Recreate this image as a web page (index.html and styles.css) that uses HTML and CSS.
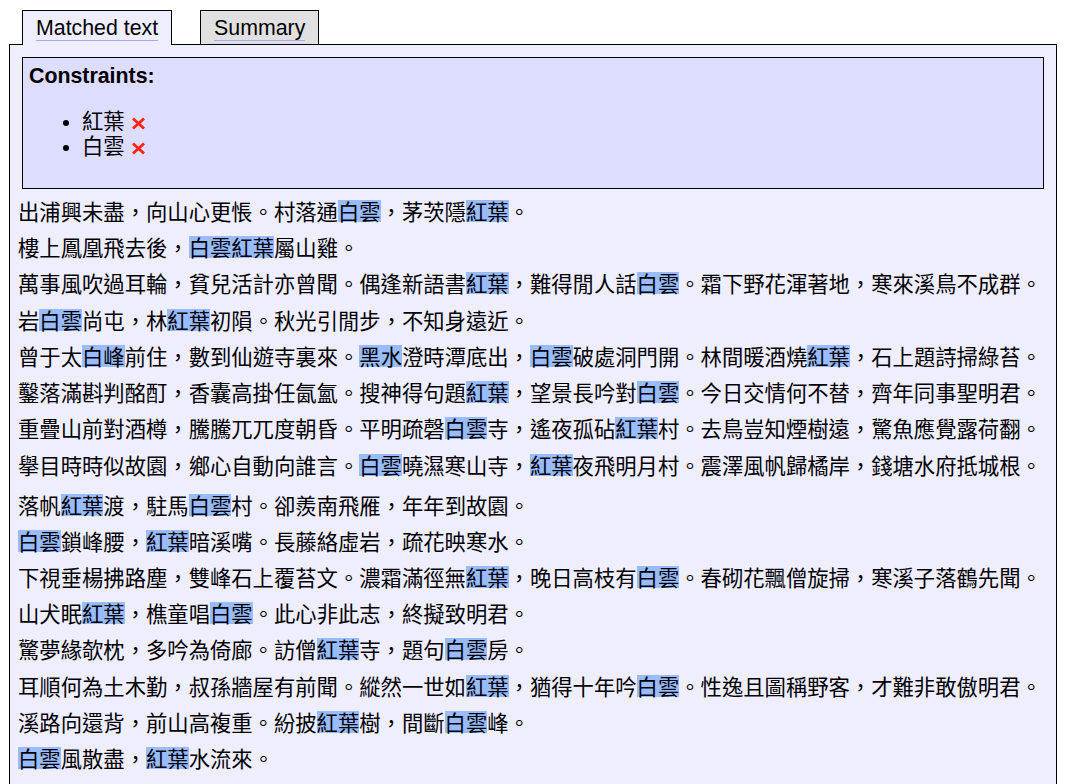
FILE: index.html
```html
<!DOCTYPE html>
<html lang="zh-Hant">
<head>
    <meta charset="UTF-8">
    <title>Matched text</title>
    <link rel="stylesheet" href="styles.css">
</head>
<body>

    <div id="tab-bar">
        <a class="tab tab-active" href="#matched"><span class="tab-label">Matched text</span></a>
        <a class="tab" href="#summary"><span class="tab-label">Summary</span></a>
    </div>

    <div id="main-container">

        <div id="constraints-box">
            <h3 class="constraints-title">Constraints:</h3>
            <ul class="constraints-list">
                <li>紅葉 <svg class="remove-icon" width="15" height="13" viewBox="0 0 15 13"><path d="M2 1.5 L13 11.5 M13 1.5 L2 11.5" /></svg></li>
                <li>白雲 <svg class="remove-icon" width="15" height="13" viewBox="0 0 15 13"><path d="M2 1.5 L13 11.5 M13 1.5 L2 11.5" /></svg></li>
            </ul>
        </div>

        <div id="match-list">
            <div class="match-line">出浦興未盡，向山心更悵。村落通<span class="hit">白雲</span>，茅茨隱<span class="hit">紅葉</span>。</div>
            <div class="match-line">樓上鳳凰飛去後，<span class="hit">白雲紅葉</span>屬山雞。</div>
            <div class="match-line">萬事風吹過耳輪，貧兒活計亦曾聞。偶逢新語書<span class="hit">紅葉</span>，難得閒人話<span class="hit">白雲</span>。霜下野花渾著地，寒來溪鳥不成群。</div>
            <div class="match-line">岩<span class="hit">白雲</span>尚屯，林<span class="hit">紅葉</span>初隕。秋光引閒步，不知身遠近。</div>
            <div class="match-line">曾于太<span class="hit">白峰</span>前住，數到仙遊寺裏來。<span class="hit">黑水</span>澄時潭底出，<span class="hit">白雲</span>破處洞門開。林間暖酒燒<span class="hit">紅葉</span>，石上題詩掃綠苔。</div>
            <div class="match-line">鑿落滿斟判酩酊，香囊高掛任氤氳。搜神得句題<span class="hit">紅葉</span>，望景長吟對<span class="hit">白雲</span>。今日交情何不替，齊年同事聖明君。</div>
            <div class="match-line">重疊山前對酒樽，騰騰兀兀度朝昏。平明疏磬<span class="hit">白雲</span>寺，遙夜孤砧<span class="hit">紅葉</span>村。去鳥豈知煙樹遠，驚魚應覺露荷翻。</div>
            <div class="match-line line-tall">擧目時時似故園，鄉心自動向誰言。<span class="hit">白雲</span>曉濕寒山寺，<span class="hit">紅葉</span>夜飛明月村。震澤風帆歸橘岸，錢塘水府抵城根。</div>
            <div class="match-line line-taller">落帆<span class="hit">紅葉</span>渡，駐馬<span class="hit">白雲</span>村。卻羨南飛雁，年年到故園。</div>
            <div class="match-line"><span class="hit">白雲</span>鎖峰腰，<span class="hit">紅葉</span>暗溪嘴。長藤絡虛岩，疏花映寒水。</div>
            <div class="match-line">下視垂楊拂路塵，雙峰石上覆苔文。濃霜滿徑無<span class="hit">紅葉</span>，晚日高枝有<span class="hit">白雲</span>。春砌花飄僧旋掃，寒溪子落鶴先聞。</div>
            <div class="match-line">山犬眠<span class="hit">紅葉</span>，樵童唱<span class="hit">白雲</span>。此心非此志，終擬致明君。</div>
            <div class="match-line">驚夢緣欹枕，多吟為倚廊。訪僧<span class="hit">紅葉</span>寺，題句<span class="hit">白雲</span>房。</div>
            <div class="match-line">耳順何為土木勤，叔孫牆屋有前聞。縱然一世如<span class="hit">紅葉</span>，猶得十年吟<span class="hit">白雲</span>。性逸且圖稱野客，才難非敢傲明君。</div>
            <div class="match-line">溪路向還背，前山高複重。紛披<span class="hit">紅葉</span>樹，間斷<span class="hit">白雲</span>峰。</div>
            <div class="match-line"><span class="hit">白雲</span>風散盡，<span class="hit">紅葉</span>水流來。</div>
        </div>
    </div>

</body>
</html>
```

FILE: styles.css
```css
body {
    margin: 10px 9px 0 9px;
    background-color: white;
    font-family: "Liberation Sans", Arial, "Noto Sans CJK SC", sans-serif;
    font-size: 21.33px;
    color: black;
}
#tab-bar {
    display: flex;
    align-items: flex-end;
    gap: 28px;
    padding-left: 13px;
}
.tab {
    display: block;
    padding: 5px 13px 3px 13px;
    border: 1px solid black;
    border-bottom: none;
    background-color: #e0e0e0;
    color: black;
    text-decoration: none;
}
.tab-active {
    position: relative;
    margin-bottom: -1px;
    padding-bottom: 4px;
    background-color: #eef;
}
.tab-label {
    display: inline-block;
    line-height: 23px;
    border-bottom: 1px solid #a8a8ff;
}
#main-container {
    border: 1px solid black;
    background-color: #eef;
    padding: 12px 8px 40px 8px;
    height: 800px;
}
#constraints-box {
    margin: 0 4px 4px 4px;
    padding: 6px;
    border: 1px solid black;
    background-color: #ddf;
    height: 118px;
}
.constraints-title {
    margin: 0;
    font-size: 21.33px;
    line-height: 24px;
    font-weight: bold;
}
.constraints-list {
    margin: 22px 0 0 0;
    padding-left: 53px;
    font-family: "Liberation Sans", "Noto Sans CJK SC", sans-serif;
    line-height: 25px;
}
.remove-icon {
    vertical-align: -1px;
}
.remove-icon path {
    stroke: #f21;
    stroke-width: 2.8;
    fill: none;
}
.match-line {
    font-family: "Noto Sans CJK SC", "Noto Sans CJK TC", sans-serif;
    font-size: 21.33px;
    line-height: 36.2px;
    white-space: nowrap;
}
.line-tall {
    margin-top: 1px;
}
.line-taller {
    margin-top: 3px;
}
.hit {
    display: inline-block;
    line-height: 22px;
    background-color: #9bf;
}
```
